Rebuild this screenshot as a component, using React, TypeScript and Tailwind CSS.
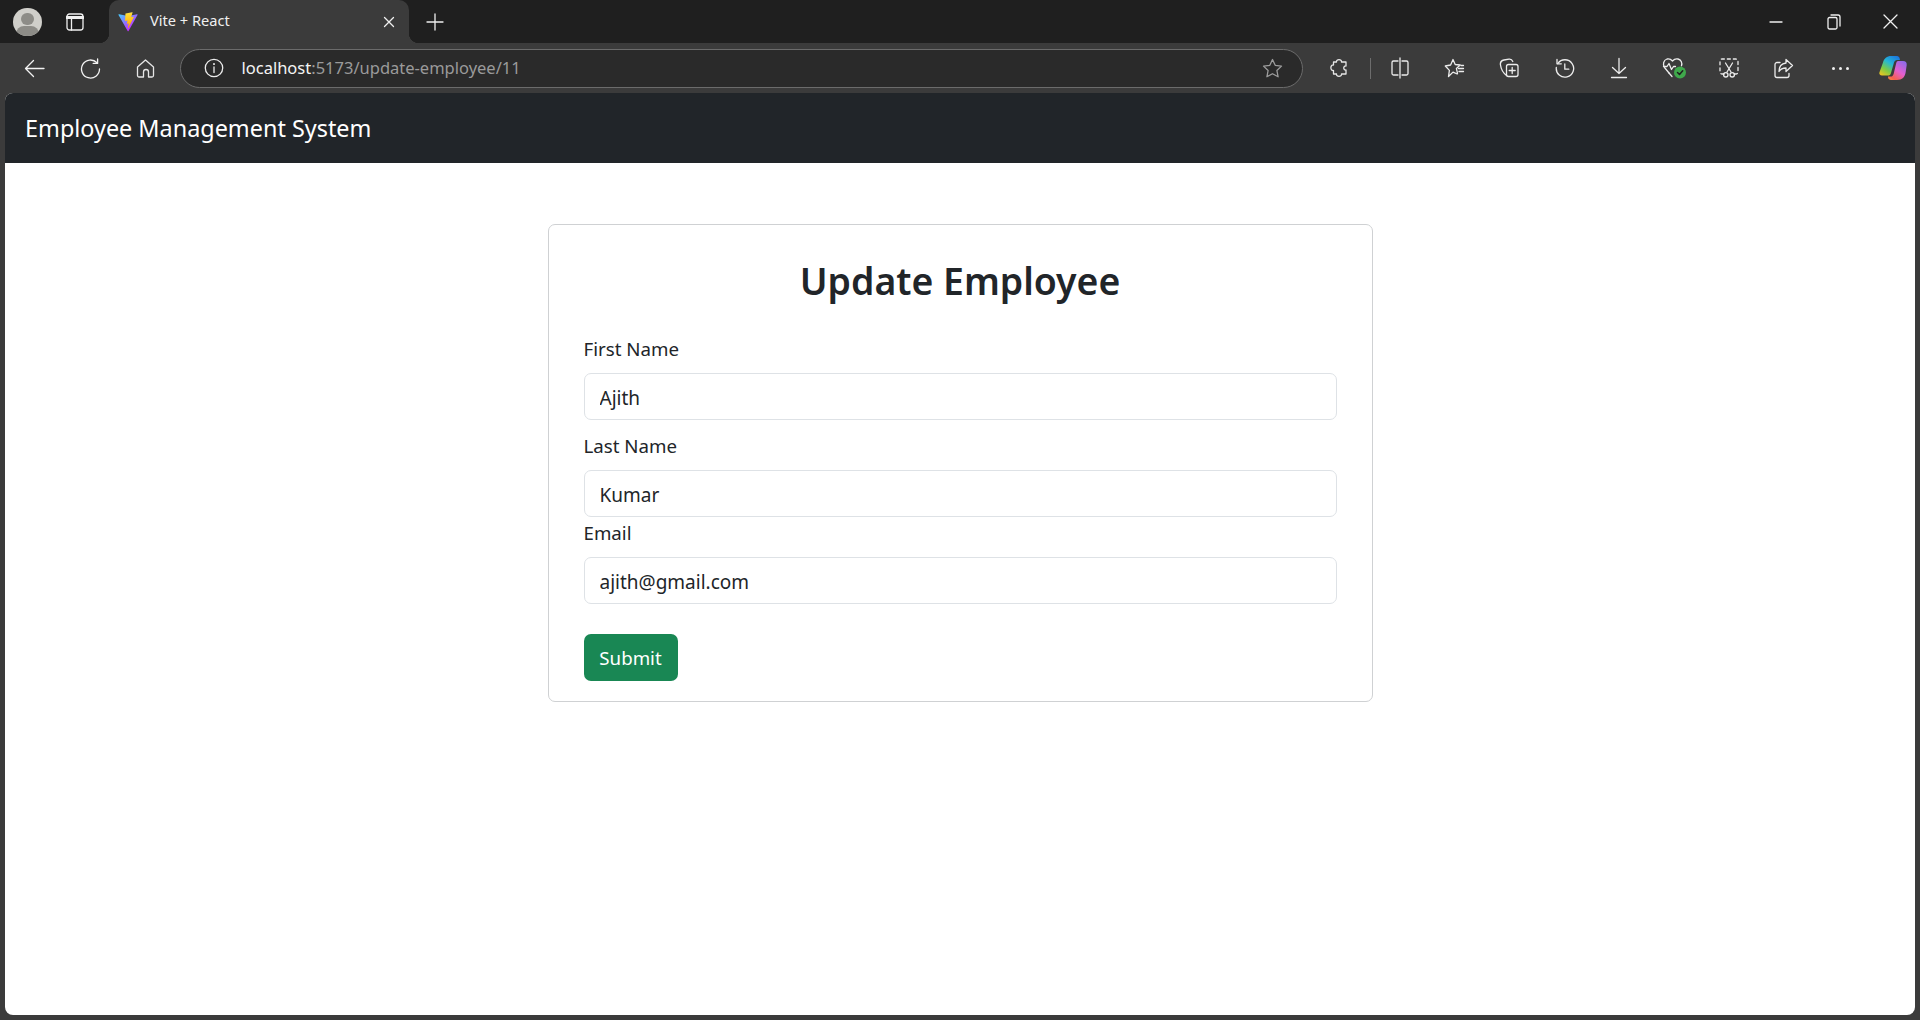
import type { ReactNode } from 'react';

const chromeFont = "font-['Noto_Sans','Open_Sans',sans-serif]";

function Glyph({ w = 20, h = 20, box, className = '', children }: { w?: number; h?: number; box?: string; className?: string; children: ReactNode }) {
    return (
        <svg
            width={w}
            height={h}
            viewBox={box ?? `0 0 ${w} ${h}`}
            fill="none"
            stroke="currentColor"
            strokeWidth="1.3"
            strokeLinecap="round"
            strokeLinejoin="round"
            className={className}
        >
            {children}
        </svg>
    );
}

function ToolSlot({ children }: { children: ReactNode }) {
    return <div className="flex h-full w-[54.8px] shrink-0 items-center justify-center text-[#ececec]">{children}</div>;
}

function ViteIcon() {
    return (
        <svg width="20" height="20" viewBox="0 0 410 404">
            <defs>
                <linearGradient id="viteA" x1="6" y1="33" x2="235" y2="344" gradientUnits="userSpaceOnUse">
                    <stop stopColor="#41D1FF" />
                    <stop offset="1" stopColor="#BD34FE" />
                </linearGradient>
                <linearGradient id="viteB" x1="194" y1="8" x2="236" y2="292" gradientUnits="userSpaceOnUse">
                    <stop stopColor="#FFEA83" />
                    <stop offset="0.08" stopColor="#FFDD35" />
                    <stop offset="1" stopColor="#FFA800" />
                </linearGradient>
            </defs>
            <path fill="url(#viteA)" d="M399.641 59.5246L215.643 388.545C211.844 395.338 202.084 395.378 198.228 388.618L10.5817 59.5563C6.38087 52.1896 12.6802 43.2665 21.0281 44.7586L205.223 77.6824C206.398 77.8924 207.601 77.8904 208.776 77.6763L389.119 44.8058C397.439 43.2894 403.768 52.1434 399.641 59.5246Z" />
            <path fill="url(#viteB)" d="M292.965 1.5744L156.801 28.2552C154.563 28.6937 152.906 30.5903 152.771 32.8664L144.395 174.33C144.198 177.662 147.258 180.248 150.51 179.498L188.42 170.749C191.967 169.931 195.172 173.055 194.443 176.622L183.18 231.775C182.422 235.487 185.907 238.661 189.532 237.56L212.947 230.446C216.577 229.344 220.065 232.527 219.297 236.242L201.398 322.875C200.278 328.294 207.486 331.249 210.492 326.603L212.5 323.5L323.454 102.072C325.312 98.3645 322.108 94.137 318.036 94.9228L279.014 102.454C275.347 103.161 272.227 99.746 273.262 96.1583L298.731 7.86689C299.767 4.27314 296.636 0.855181 292.965 1.5744Z" />
        </svg>
    );
}

function CopilotIcon() {
    return (
        <svg width="28" height="26" viewBox="0 0 28 26">
            <defs>
                <linearGradient id="copA" x1="18" y1="0" x2="4" y2="22" gradientUnits="userSpaceOnUse">
                    <stop stopColor="#1b6fe0" />
                    <stop offset="0.4" stopColor="#25b7d6" />
                    <stop offset="0.7" stopColor="#7ccb45" />
                    <stop offset="1" stopColor="#f5c51f" />
                </linearGradient>
                <linearGradient id="copB" x1="24" y1="6" x2="10" y2="26" gradientUnits="userSpaceOnUse">
                    <stop stopColor="#8f6be8" />
                    <stop offset="0.45" stopColor="#e35fd0" />
                    <stop offset="0.8" stopColor="#f5604f" />
                    <stop offset="1" stopColor="#f6923c" />
                </linearGradient>
            </defs>
            <path fill="url(#copA)" d="M12 1h6c1.5 0 2.2 1 2.6 2.2L21 5h-3c-1.5 0-2.5 1-3 2.6L12 18c-.5 1.8-1.6 2.6-3 2.6H3c-2 0-3-1.4-2.6-3L4 7.5C5 3.5 8 1 12 1Z" />
            <path fill="url(#copB)" d="M19 6h5c2.6 0 4 1.6 3.7 4l-1 7c-.6 5-3.6 8-8.7 8h-6c-1.6 0-2.5-.9-2.9-2.2L9 21.5h2.5c1.6 0 2.6-.9 3.1-2.6L17 9c.4-1.9 1-3 2-3Z" />
        </svg>
    );
}

function TabStrip() {
    return (
        <div className="flex h-[43px] shrink-0 items-stretch bg-[#1f1f1f] text-[#f0f0f0]">
            <div className="flex w-[109px] shrink-0 items-center">
                <div className="relative ml-[13px] h-[28px] w-[29px] overflow-hidden rounded-full bg-[#d0cfca]">
                    <span className="absolute left-[8px] top-[5px] h-[12px] w-[13px] rounded-full bg-[#8d8c87]" />
                    <span className="absolute left-[3px] top-[18px] h-[16px] w-[23px] rounded-full bg-[#8d8c87]" />
                </div>
                <Glyph w={18} h={18} className="ml-[24px]">
                    <rect x="1" y="1" width="16" height="16" rx="2.5" />
                    <path d="M1 4.5h16" strokeWidth="3" />
                    <path d="M5.5 5v12" />
                </Glyph>
            </div>
            <div className="relative flex w-[300px] shrink-0 items-center rounded-t-[10px] bg-[#3b3b3b] pl-[9px]">
                <span className="absolute bottom-0 left-[-10px] h-[10px] w-[10px] bg-[radial-gradient(circle_at_0_0,#1f1f1f_10px,#3b3b3b_10.5px)]" />
                <span className="absolute bottom-0 right-[-10px] h-[10px] w-[10px] bg-[radial-gradient(circle_at_100%_0,#1f1f1f_10px,#3b3b3b_10.5px)]" />
                <ViteIcon />
                <span className={`ml-[12px] pb-[2px] text-[14.6px] ${chromeFont}`}>Vite + React</span>
                <Glyph w={12} h={12} className="absolute right-[14px] top-[16px]">
                    <path d="M1.5 1.5l9 9M10.5 1.5l-9 9" />
                </Glyph>
            </div>
            <div className="ml-[17px] flex items-center">
                <Glyph w={18} h={18}>
                    <path d="M9 1v16M1 9h16" />
                </Glyph>
            </div>
            <div className="ml-auto flex items-center">
                <div className="flex w-[58px] justify-center">
                    <Glyph w={14} h={14}>
                        <path d="M1 7h12" />
                    </Glyph>
                </div>
                <div className="flex w-[58px] justify-center">
                    <Glyph w={14} h={16}>
                        <rect x="1" y="3.5" width="9" height="11.5" rx="1.5" />
                        <path d="M4 1h7a2 2 0 0 1 2 2v9" />
                    </Glyph>
                </div>
                <div className="flex w-[57px] justify-center pr-[2px]">
                    <Glyph w={15} h={15}>
                        <path d="M1 1l13 13M14 1L1 14" />
                    </Glyph>
                </div>
            </div>
        </div>
    );
}

function Toolbar() {
    return (
        <div className="flex h-[50px] shrink-0 items-center bg-[#3b3b3b] pl-[7px]">
            <div className="flex h-full w-[55px] shrink-0 items-center justify-center text-[#f2f2f2]">
                <Glyph w={21} h={19}>
                    <path d="M20 9.5H1.5M9.5 1.5l-8 8 8 8" />
                </Glyph>
            </div>
            <div className="flex h-full w-[56px] shrink-0 items-center justify-center text-[#f2f2f2]">
                <Glyph w={21} h={21}>
                    <path d="M17 4.8A9 9 0 1 0 19.5 11" />
                    <path d="M17.6 1v4.4h-4.4" />
                </Glyph>
            </div>
            <div className="flex h-full w-[55px] shrink-0 items-center justify-center text-[#e6e6e6]">
                <Glyph w={19} h={19}>
                    <path d="M1.5 8L9.5 1l8 7v8.5a1.5 1.5 0 0 1-1.5 1.5h-3.5v-5a2.5 2.5 0 0 0-5 0v5H3a1.5 1.5 0 0 1-1.5-1.5Z" />
                </Glyph>
            </div>
            <div className="ml-[6.5px] flex h-[39px] w-[1123px] shrink-0 items-center rounded-full border border-[#6b6b6b] bg-[#2a2a2a] pl-[23px] pr-[19px] text-[#ececec]">
                <Glyph w={20} h={20}>
                    <circle cx="10" cy="10" r="8.7" />
                    <path d="M10 9v5.5" />
                    <path d="M10 5.8v.4" strokeWidth="1.8" />
                </Glyph>
                <span className={`ml-[18px] text-[16.5px] ${chromeFont}`}>
                    <span className="text-[#f4f4f4]">localhost</span>
                    <span className="text-[#9a9a9a]">:5173/update-employee/11</span>
                </span>
                <Glyph w={21} h={21} className="ml-auto text-[#9c9c9c]">
                    <path d="M10.5 1.5l2.7 5.8 6.3.8-4.6 4.4 1.2 6.3-5.6-3.1-5.6 3.1 1.2-6.3L1.5 8.1l6.3-.8Z" />
                </Glyph>
            </div>
            <div className="ml-[9px] flex h-full w-[55px] shrink-0 items-center justify-center text-[#e6e6e6]">
                <Glyph w={20} h={20}>
                    <path d="M7.5 4C7 .8 13 .8 12.5 4H17v4c-3-.5-3 4.500 0 4v4h-4.500c.5 3.200-5.500 3.200-5 0H4.500v-3.500c-3.500.5-3.500-6 0-5.500V4Z" />
                </Glyph>
            </div>
            <div className="ml-[3px] mr-[1.5px] h-[21px] w-[1.5px] shrink-0 bg-[#6d6d6d]" />
            <ToolSlot>
                <Glyph w={20} h={22}>
                    <path d="M8 4H3.5A1.5 1.5 0 0 0 2 5.5v11A1.5 1.5 0 0 0 3.500 18H8M12 4h4.500A1.500 1.500 0 0 1 18 5.500v11a1.500 1.500 0 0 1-1.500 1.500H12M10 1v20" />
                </Glyph>
            </ToolSlot>
            <ToolSlot>
                <Glyph w={21} h={20}>
                    <path d="M9 1.5l2.2 5 5 .5-3.8 3.4 1.1 5-.3.6-4.2-1.900-4.500 4.400.9-6.100L1.300 8l5.300-1Z" />
                    <path d="M14.5 10.5h5M15 13.5h4.5M17 7.5h2.5" />
                </Glyph>
            </ToolSlot>
            <ToolSlot>
                <Glyph w={20} h={20}>
                    <path d="M7.5 17.5C5 15.5 2 11 1.5 7 1 4.5 2.5 2.5 5 2l5-.8c1.800-.2 3.200.8 3.800 2.300" />
                    <rect x="7.5" y="6.5" width="11.5" height="12" rx="2" />
                    <path d="M13.2 9.5v6M10.2 12.5h6" />
                </Glyph>
            </ToolSlot>
            <ToolSlot>
                <Glyph w={21} h={21}>
                    <path d="M3.8 5.5a8.7 8.7 0 1 1-1.500 4" />
                    <path d="M3 1.5v4.3h4.300M10.800 6v5.200h4" />
                </Glyph>
            </ToolSlot>
            <ToolSlot>
                <Glyph w={18} h={22}>
                    <path d="M9 1.5v15M2.5 10.5L9 16.500l6.500-6M1.500 20.500h15" />
                </Glyph>
            </ToolSlot>
            <ToolSlot>
                <svg width="24" height="22" viewBox="0 0 24 22" fill="none" stroke="currentColor" strokeWidth="1.3" strokeLinecap="round" strokeLinejoin="round">
                    <path d="M7 16L2.5 10.5C.5 7.5 1.5 3 5 2c2-.5 4 .3 5.5 2C12 2.3 14 1.5 16 2c3 .8 4.500 3.800 3.500 6.800" />
                    <path d="M1.5 9.5H5l2-3 2.500 6 2-3h2" />
                    <path d="M7 16l3 3.500" />
                    <circle cx="18" cy="15.5" r="6" fill="#3fa84b" stroke="none" />
                    <path d="M15.5 15.5l2 2 3.200-3.700" stroke="#1f1f1f" strokeWidth="1.5" />
                </svg>
            </ToolSlot>
            <ToolSlot>
                <Glyph w={22} h={22}>
                    <path d="M6 17H4a2 2 0 0 1-2-2V4a2 2 0 0 1 2-2h14a2 2 0 0 1 2 2v11a2 2 0 0 1-2 2h-2" strokeDasharray="3 3" />
                    <path d="M7.5 6l5.500 9M14.500 6L9 15" />
                    <circle cx="7.8" cy="17.8" r="2.2" />
                    <circle cx="14.2" cy="17.8" r="2.2" />
                </Glyph>
            </ToolSlot>
            <ToolSlot>
                <Glyph w={21} h={21}>
                    <path d="M7 4.5H4a2 2 0 0 0-2 2v11a2 2 0 0 0 2 2h10a2 2 0 0 0 2-2v-2" />
                    <path d="M13 1.5l6.500 6-6.500 6V10c-3.500 0-5.500 1-7 3.500 0-5 2.500-8 7-8.500Z" />
                </Glyph>
            </ToolSlot>
            <ToolSlot>
                <div className="ml-[5px] flex gap-[4px]">
                    <span className="h-[3px] w-[3px] rounded-full bg-[#f0f0f0]" />
                    <span className="h-[3px] w-[3px] rounded-full bg-[#f0f0f0]" />
                    <span className="h-[3px] w-[3px] rounded-full bg-[#f0f0f0]" />
                </div>
            </ToolSlot>
            <ToolSlot>
                <CopilotIcon />
            </ToolSlot>
        </div>
    );
}

function Field({ label, value, spacing }: { label: string; value: string; spacing: string }) {
    return (
        <div className={spacing}>
            <label className="block h-[29px] text-[18.7px] leading-[27px] text-[#212529]">{label}</label>
            <input
                readOnly
                value={value}
                className="mt-[9px] block h-[47px] w-full rounded-[7px] border border-[#dee2e6] bg-white px-[15px] pt-[2px] text-[19px] text-[#212529] outline-none"
            />
        </div>
    );
}

export default function App() {
    return (
        <div className={`flex h-[1020px] w-[1920px] flex-col overflow-hidden bg-[#3b3b3b] ${chromeFont}`}>
            <TabStrip />
            <Toolbar />
            <div className="mx-[5px] mb-[5px] flex flex-1 flex-col overflow-hidden rounded-[8px] bg-white">
                <nav className="flex h-[70px] shrink-0 items-center bg-[#212529] pl-[20px]">
                    <span className="pt-[2px] text-[23.4px] text-white">Employee Management System</span>
                </nav>
                <main className="flex justify-center pt-[61px]">
                    <div className="h-[478px] w-[825px] rounded-[7px] border border-[#cfd1d3] px-[35px] pt-[29px]">
                        <h2 className="h-[81px] text-center text-[37.4px] font-semibold leading-[53px] text-[#212529]">Update Employee</h2>
                        <Field label="First Name" value="Ajith" spacing="mb-[12px]" />
                        <Field label="Last Name" value="Kumar" spacing="mb-[2px]" />
                        <Field label="Email" value="ajith@gmail.com" spacing="mb-[30px]" />
                        <button className="h-[47px] w-[94px] rounded-[7px] bg-[#198754] pt-[2px] text-[18.7px] text-white">Submit</button>
                    </div>
                </main>
            </div>
        </div>
    );
}
